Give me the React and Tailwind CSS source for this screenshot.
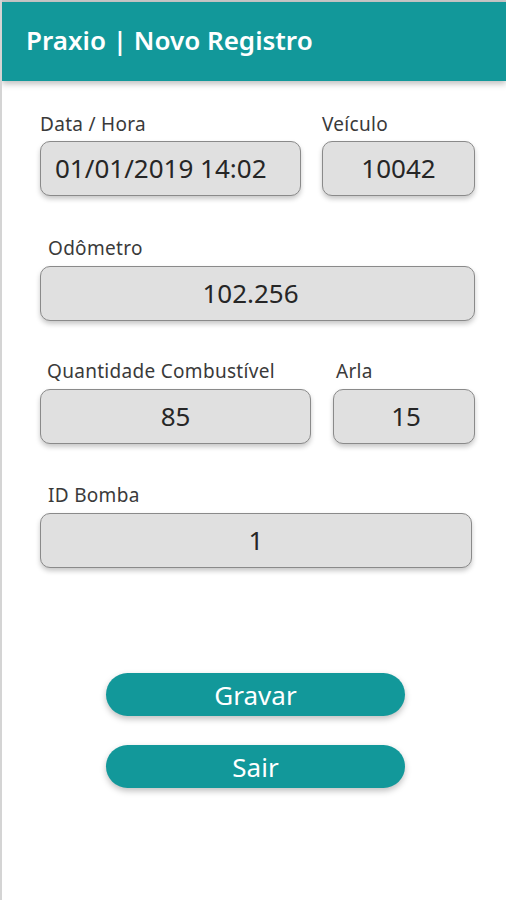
export default function App() {
  const font = { fontFamily: '"Noto Sans", "Open Sans", sans-serif' };
  const box =
    "h-[55px] rounded-[10px] border border-[#8a8a8a] bg-[#e0e0e0] shadow-[0_3px_5px_rgba(0,0,0,0.22)] flex items-center text-[26px] text-[#262626]";
  const label = "text-[19px] text-[#3a3a3a] leading-[24px] tracking-[0.3px]";
  const btn =
    "w-[299px] h-[43px] rounded-full bg-[#12989a] text-white text-[26px] leading-none flex items-center justify-center shadow-[0_3px_6px_rgba(0,0,0,0.25)]";
  return (
    <div
      className="w-[506px] h-[900px] bg-white border-l-2 border-[#d4d4d4] relative overflow-hidden"
      style={font}
    >
      <div className="h-[2px] bg-[#c8c8c8]" />
      <div className="h-[79px] bg-[#12989a] flex items-center pl-[24px] pb-[2px] shadow-[0_3px_6px_rgba(0,0,0,0.25)] relative z-10">
        <span className="text-white text-[26px] font-semibold tracking-[0px]">
          Praxio | Novo Registro
        </span>
      </div>

      <div className="pl-[38px] pr-[29px]">
        <div className="flex gap-[21px] mt-[31px]">
          <div className="w-[261px] flex flex-col gap-[5px]">
            <div className={label}>Data / Hora</div>
            <div className={box + " pl-[14px]"}>01/01/2019 14:02</div>
          </div>
          <div className="w-[153px] flex flex-col gap-[5px]">
            <div className={label}>Veículo</div>
            <div className={box + " justify-center"}>10042</div>
          </div>
        </div>

        <div className="flex flex-col gap-[6px] mt-[40px]">
          <div className={label + " pl-[8px]"}>Odômetro</div>
          <div className={box + " w-[435px] justify-center pr-[14px]"}>102.256</div>
        </div>

        <div className="flex gap-[22px] mt-[38px]">
          <div className="w-[271px] flex flex-col gap-[6px]">
            <div className={label + " pl-[7px]"}>Quantidade Combustível</div>
            <div className={box + " justify-center"}>85</div>
          </div>
          <div className="w-[142px] flex flex-col gap-[6px]">
            <div className={label + " pl-[3px]"}>Arla</div>
            <div className={box + " justify-center pl-[4px]"}>15</div>
          </div>
        </div>

        <div className="flex flex-col gap-[6px] mt-[39px]">
          <div className={label + " pl-[8px]"}>ID Bomba</div>
          <div className={box + " w-[432px] justify-center"}>1</div>
        </div>
      </div>

      <div className="flex flex-col items-center gap-[29px] mt-[105px] pl-[3px]">
        <div className={btn}>Gravar</div>
        <div className={btn}>Sair</div>
      </div>
    </div>
  );
}
